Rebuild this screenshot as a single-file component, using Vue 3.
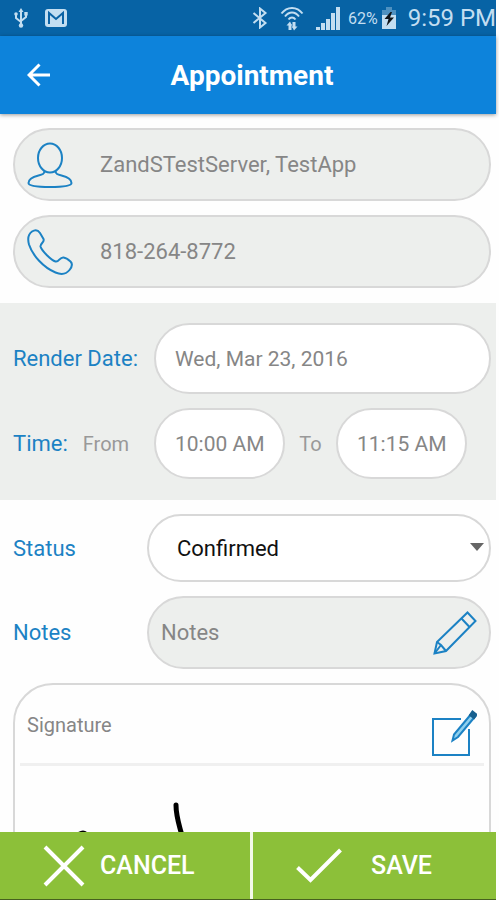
<script setup>
import { reactive } from 'vue'

const emit = defineEmits(['cancel', 'save'])

const appointment = reactive({
  name: 'ZandSTestServer, TestApp',
  phone: '818-264-8772',
  date: 'Wed, Mar 23, 2016',
  from: '10:00 AM',
  to: '11:15 AM',
  status: 'Confirmed',
  notes: ''
})

const onSave = () => {
  emit('save', { ...appointment })
}
</script>

<template>
  <form class="screen" @submit.prevent="onSave">
    <div class="status-bar">
      <svg width="16" height="22" viewBox="0 0 16 22" fill="none" stroke="currentColor" stroke-width="2">
        <path d="M8 4v15M3 7v4l5 4M13 7v3l-5 4" />
        <path d="M5.500 5 8 1l2.500 4z" fill="currentColor" stroke="none" />
        <circle cx="8" cy="18.500" r="2.200" fill="currentColor" stroke="none" />
        <circle cx="3" cy="7" r="1.800" fill="currentColor" stroke="none" />
        <path d="M11.300 5h3.400v3.400h-3.400z" fill="currentColor" stroke="none" />
      </svg>
      <svg class="mail" width="22" height="18" viewBox="0 0 22 18">
        <rect width="22" height="18" rx="3" fill="currentColor" />
        <path d="M4 15V4l7 6 7-6v11" fill="none" stroke="#0a62a4" stroke-width="2" />
      </svg>
      <div class="indicators">
        <svg width="16" height="22" viewBox="0 0 16 22" fill="none" stroke="currentColor" stroke-width="2">
          <path d="M1.500 6l12 10L8 20.500v-19L13.500 6l-12 10" />
        </svg>
        <svg width="24" height="26" viewBox="0 0 24 26" fill="none" stroke="currentColor" stroke-width="2">
          <path d="M1.500 8.500C7 1 17 1 22.500 8.500M5 11.500c4-5.300 10-5.300 14 0M8.500 14.500c2-2.700 5-2.700 7 0" />
          <path d="M10 25v-6M14 17v6" stroke-width="3" />
          <path d="M6.500 20.500l3.500-4 2 4zM12 21.500h5.500l-3.500 4z" fill="currentColor" stroke="none" />
        </svg>
        <svg width="24" height="23" viewBox="0 0 24 23" fill="currentColor">
          <path d="M0 20h4v3H0zM5 16h4v7H5zM10 12h4v11h-4zM15 6h4v17h-4zM20 0h4v23h-4z" />
        </svg>
        <div class="battery">
          <span>62%</span>
          <svg width="14" height="22" viewBox="0 0 14 22">
            <path d="M4 0h6v3h4v19H0V3h4z" fill="currentColor" />
            <path d="M4 0h6v3h4v5H0V3h4z" fill="#4f91c0" />
            <path d="M8.500 5 2.500 12h4l-2 7L12 10.500H8L10 5z" fill="#101418" />
          </svg>
        </div>
        <span class="clock">9:59 PM</span>
      </div>
    </div>

    <header class="app-bar">
      <button type="button" class="back" aria-label="Back" @click="emit('cancel')">
        <svg width="24" height="24" viewBox="0 0 24 24" fill="none" stroke="currentColor" stroke-width="3">
          <path d="M23 12H2M12.500 1.500 2 12l10.500 10.500" />
        </svg>
      </button>
      <h1>Appointment</h1>
    </header>

    <main class="content">
      <div class="group">
        <div class="field">
          <label for="name" aria-label="Name">
            <svg width="46" height="46" viewBox="0 0 46 46" fill="none" stroke="currentColor" stroke-width="2">
              <ellipse cx="23" cy="16" rx="12" ry="14.500" />
              <path d="M17.500 29c0 3-2 3.500-6 4.500-6 1.500-10 4-10 7.500 0 2.500 7 4 21.500 4s21.500-1.500 21.500-4c0-3.500-4-6-10-7.500-4-1-6-1.500-6-4.500" />
            </svg>
          </label>
          <input id="name" v-model="appointment.name" type="text" />
        </div>
        <div class="field">
          <label for="phone" aria-label="Phone">
            <svg width="46" height="46" viewBox="0 0 46 46" fill="none" stroke="currentColor" stroke-width="2">
              <path d="M5 2.500C8 .5 11 1 13 4l3.500 6c1.500 3-3.500 4.500-3 7.500 1 4 10.500 13.500 15 15 3.500 1 4-4.500 8-4 2.500.3 5 2.200 7 4 2.500 2.500 1 6-1 8.500-3.500 4.300-8 5-14 2.500C16.500 38.500 5.500 26.500 2 15.500.5 10 1.500 5 5 2.500z" />
            </svg>
          </label>
          <input id="phone" v-model="appointment.phone" type="tel" />
        </div>
      </div>

      <div class="group schedule">
        <div class="row">
          <label for="date">Render Date:</label>
          <input id="date" v-model="appointment.date" class="pill" type="text" />
        </div>
        <div class="row">
          <div class="time-label">
            <span>Time:</span>
            <label for="from">From</label>
          </div>
          <input id="from" v-model="appointment.from" class="pill time" type="text" />
          <label for="to" class="to">To</label>
          <input id="to" v-model="appointment.to" class="pill time" type="text" />
        </div>
      </div>

      <div class="group details">
        <div class="row">
          <label for="status">Status</label>
          <div class="select-wrap">
            <select id="status" v-model="appointment.status">
              <option>Confirmed</option>
              <option>Pending</option>
              <option>Cancelled</option>
            </select>
            <svg class="caret" width="14" height="8" viewBox="0 0 14 8">
              <path d="M0 0h14L7 8z" fill="#666" />
            </svg>
          </div>
        </div>
        <div class="row">
          <label for="notes">Notes</label>
          <div class="field notes">
            <input id="notes" v-model="appointment.notes" type="text" placeholder="Notes" />
            <svg width="44" height="44" viewBox="0 0 44 44" fill="none" stroke="currentColor" stroke-width="2">
              <path d="M1.500 42.500 4 31 34.500 1.500l8 8.500L13 40z" />
              <path d="M28.500 7.500l8 8.500M4 31l4 3 5 6M1.500 42.500l6.500-8.500" />
            </svg>
          </div>
        </div>

        <section class="signature">
          <div class="signature-head">
            <h2>Signature</h2>
            <button type="button" aria-label="Edit signature">
              <svg width="46" height="46" viewBox="0 0 46 46" fill="none" stroke="currentColor" stroke-width="2">
                <path d="M30 9H2v36h36V19" />
                <path d="M21.500 30.500l1.500-6L41 3l3.500 3L27 27z" fill="#8fd0ee" />
                <path d="M39 5l2.500-3.500 4 3L43 8z" fill="#17608f" stroke="#17608f" />
              </svg>
            </button>
          </div>
          <svg width="240" height="150" viewBox="0 0 240 150" fill="none" stroke="#000" stroke-width="5" stroke-linecap="round" stroke-linejoin="round">
            <path d="M156 39c0 10 2 16 5 27 6 22 10 36 2 50" />
            <path d="M40 92c8-10 16-25 23-25s6 20-2 36 24 10 42-8" />
          </svg>
        </section>
      </div>
    </main>

    <footer class="actions">
      <button type="button" @click="emit('cancel')">
        <svg width="42" height="42" viewBox="0 0 42 42" fill="none" stroke="currentColor" stroke-width="4">
          <path d="M2 2l38 38M40 2 2 40" />
        </svg>
        CANCEL
      </button>
      <button type="submit" class="save">
        <svg width="46" height="36" viewBox="0 0 46 36" fill="none" stroke="currentColor" stroke-width="4">
          <path d="M1.500 19.500 14.500 32 44.500 2" />
        </svg>
        SAVE
      </button>
    </footer>
  </form>
</template>

<style>
body {
  margin: 0;
  background: #fefefe;
}
</style>

<style scoped>
.screen {
  display: flex;
  flex-direction: column;
  height: 100vh;
  box-sizing: border-box;
  padding-right: 3px;
  font-family: Roboto, "Liberation Sans", sans-serif;
  font-size: 22px;
  color: #868686;
}

.screen * {
  box-sizing: border-box;
}

svg {
  display: block;
  flex: none;
}

input,
select,
button {
  font: inherit;
  color: inherit;
  background: none;
  border: none;
  outline: none;
  padding: 0;
  min-width: 0;
}

button {
  cursor: pointer;
}

.status-bar {
  flex: none;
  display: flex;
  align-items: center;
  gap: 16px;
  height: 36px;
  padding-left: 13px;
  background: #0763a5;
  color: #c3def1;
  white-space: nowrap;
}

.indicators {
  display: flex;
  align-items: center;
  gap: 12px;
  margin-left: auto;
}

.battery {
  display: flex;
  align-items: center;
  gap: 4px;
  margin-left: -4px;
  font-size: 16px;
}

.clock {
  font-size: 24px;
}

.app-bar {
  flex: none;
  position: relative;
  z-index: 1;
  display: flex;
  align-items: center;
  height: 78px;
  padding: 0 27px;
  background: #0d83db;
  color: #fff;
  box-shadow: 0 1px 4px rgba(0, 0, 0, 0.4);
}

.app-bar h1 {
  flex: 1;
  margin: 0 16px 0 0;
  font-size: 28px;
  font-weight: 700;
  text-align: center;
}

.content {
  flex: 1;
  min-height: 0;
  overflow-y: auto;
  scrollbar-width: none;
}

.group {
  display: flex;
  flex-direction: column;
  gap: 14px;
  padding: 14px 5px 15px 13px;
}

.field {
  display: flex;
  align-items: center;
  height: 73px;
  padding: 0 12px;
  background: #edefed;
  border: 2px solid #d8d8d8;
  border-radius: 37px;
}

.field label,
.notes svg {
  color: #1c82c4;
}

.field input {
  flex: 1;
  height: 100%;
}

.field label + input {
  margin-left: 27px;
}

.schedule {
  padding-top: 20px;
  padding-bottom: 21px;
  background: #edefed;
}

.row {
  display: flex;
  align-items: center;
}

.row > label,
.time-label {
  flex: none;
  width: 141px;
  color: #1c82c4;
}

.time-label {
  display: flex;
  align-items: center;
  gap: 15px;
}

.time-label label,
.row > .to {
  font-size: 20px;
  color: #999;
}

.row > .to {
  width: 51px;
  text-align: center;
}

.pill {
  flex: 1;
  height: 71px;
  padding: 0 19px;
  background: #fff;
  border: 2px solid #d8d8d8;
  border-radius: 36px;
  font-size: 21px;
}

.time {
  flex: 0 1 131px;
}

.details .row > label {
  width: 134px;
}

.select-wrap {
  position: relative;
  flex: 1;
}

select {
  width: 100%;
  height: 68px;
  padding: 0 28px;
  appearance: none;
  background: #fff;
  border: 2px solid #d8d8d8;
  border-radius: 34px;
  color: #111;
}

.caret {
  position: absolute;
  top: 29px;
  right: 7px;
  pointer-events: none;
}

.notes {
  flex: 1;
  min-width: 0;
}

.notes input::placeholder {
  color: #868686;
  opacity: 1;
}

.signature {
  height: 250px;
  padding: 0 5px;
  border: 2px solid #d8d8d8;
  border-radius: 40px;
}

.signature-head {
  display: flex;
  align-items: center;
  justify-content: space-between;
  height: 81px;
  padding: 18px 7px 0;
  border-bottom: 3px solid #f0f0f0;
}

.signature-head h2 {
  margin: 0 0 16px;
  font-size: 20px;
  font-weight: 400;
}

.signature-head button {
  color: #1c82c4;
}

.actions {
  flex: none;
  display: flex;
  gap: 3px;
  height: 68px;
  background: #f4f9e9;
  border-bottom: 1px solid #47611f;
}

.actions button {
  flex: 1 1 250px;
  display: flex;
  align-items: center;
  gap: 15px;
  padding-left: 43px;
  background: #8cc039;
  color: #fff;
  font-size: 25px;
  font-weight: 500;
}

.actions .save {
  flex-basis: 243px;
  gap: 29px;
}
</style>
